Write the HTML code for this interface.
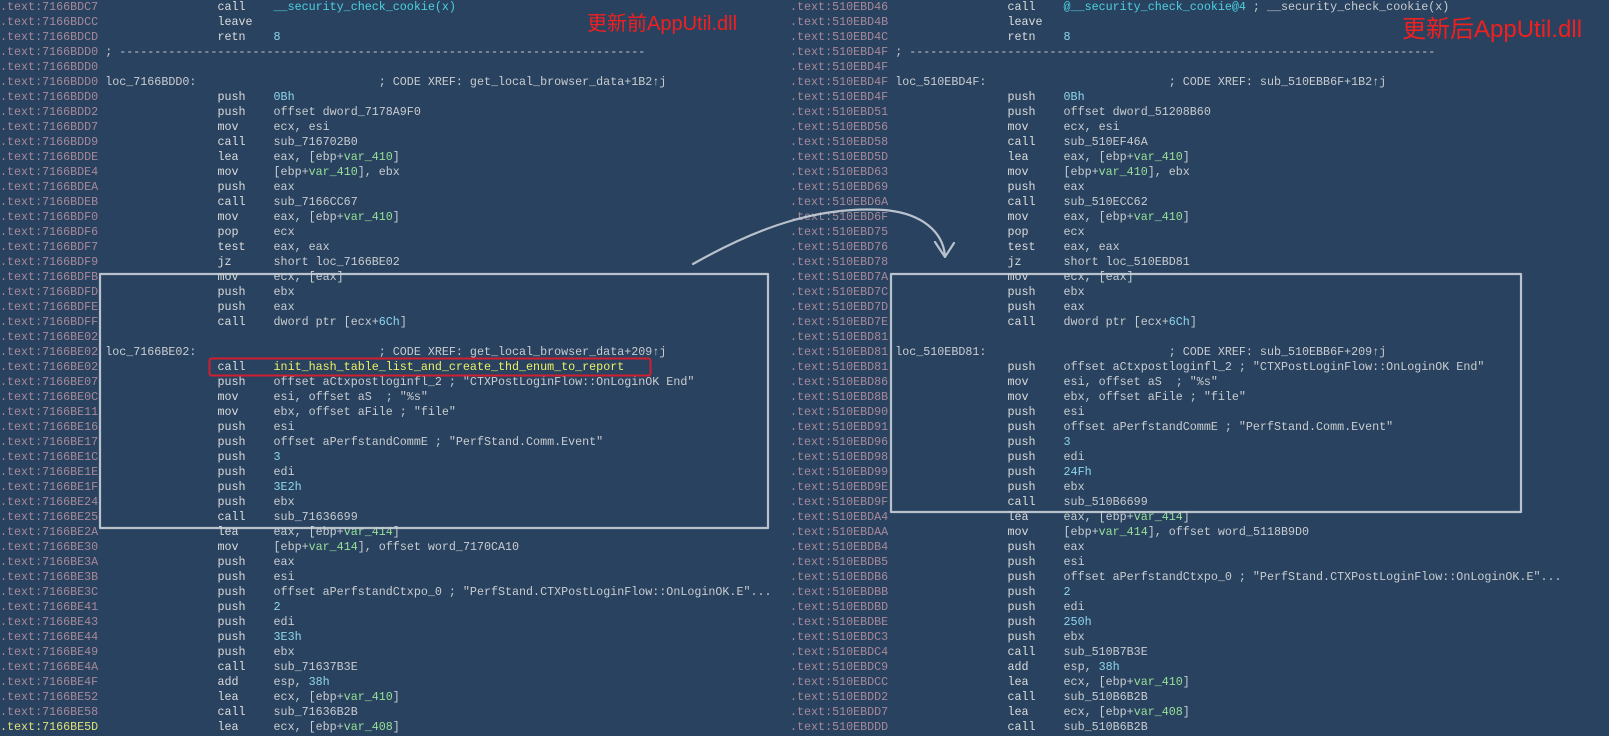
<!DOCTYPE html>
<html><head><meta charset="utf-8">
<style>
html,body{margin:0;padding:0;}
body{width:1609px;height:736px;background:#28425f;overflow:hidden;position:relative;}
pre{position:absolute;top:0;margin:0;font-family:"Liberation Mono",monospace;font-size:11.7px;line-height:15px;color:#c9ccd0;white-space:pre;}
.a{color:#a8899a}
.m{color:#dcdcdc}
.n{color:#8fd6ee}
.v{color:#98e098}
.f{color:#4fd0e0}
.y{color:#eeee66}
.ya{color:#e0e07a}
.t{position:absolute;font-family:"Liberation Sans","Noto Sans CJK SC",sans-serif;color:#f02020;font-size:20px;line-height:25px;}
svg{position:absolute;left:0;top:0}
</style></head><body>
<pre style="left:0"><span class="a">.text:7166BDC7</span>                 <span class="m">call    </span><span class="f">__security_check_cookie(x)</span>
<span class="a">.text:7166BDCC</span>                 <span class="m">leave</span>
<span class="a">.text:7166BDCD</span>                 <span class="m">retn    </span><span class="n">8</span>
<span class="a">.text:7166BDD0</span> ; ---------------------------------------------------------------------------
<span class="a">.text:7166BDD0</span>
<span class="a">.text:7166BDD0</span> loc_7166BDD0:                          ; CODE XREF: get_local_browser_data+1B2↑j
<span class="a">.text:7166BDD0</span>                 <span class="m">push    </span><span class="n">0Bh</span>
<span class="a">.text:7166BDD2</span>                 <span class="m">push    </span>offset dword_7178A9F0
<span class="a">.text:7166BDD7</span>                 <span class="m">mov     </span>ecx, esi
<span class="a">.text:7166BDD9</span>                 <span class="m">call    </span>sub_716702B0
<span class="a">.text:7166BDDE</span>                 <span class="m">lea     </span>eax, [ebp+<span class="v">var_410</span>]
<span class="a">.text:7166BDE4</span>                 <span class="m">mov     </span>[ebp+<span class="v">var_410</span>], ebx
<span class="a">.text:7166BDEA</span>                 <span class="m">push    </span>eax
<span class="a">.text:7166BDEB</span>                 <span class="m">call    </span>sub_7166CC67
<span class="a">.text:7166BDF0</span>                 <span class="m">mov     </span>eax, [ebp+<span class="v">var_410</span>]
<span class="a">.text:7166BDF6</span>                 <span class="m">pop     </span>ecx
<span class="a">.text:7166BDF7</span>                 <span class="m">test    </span>eax, eax
<span class="a">.text:7166BDF9</span>                 <span class="m">jz      </span>short loc_7166BE02
<span class="a">.text:7166BDFB</span>                 <span class="m">mov     </span>ecx, [eax]
<span class="a">.text:7166BDFD</span>                 <span class="m">push    </span>ebx
<span class="a">.text:7166BDFE</span>                 <span class="m">push    </span>eax
<span class="a">.text:7166BDFF</span>                 <span class="m">call    </span>dword ptr [ecx+<span class="n">6Ch</span>]
<span class="a">.text:7166BE02</span>
<span class="a">.text:7166BE02</span> loc_7166BE02:                          ; CODE XREF: get_local_browser_data+209↑j
<span class="a">.text:7166BE02</span>                 <span class="m">call    </span><span class="y">init_hash_table_list_and_create_thd_enum_to_report</span>
<span class="a">.text:7166BE07</span>                 <span class="m">push    </span>offset aCtxpostloginfl_2 ; "CTXPostLoginFlow::OnLoginOK End"
<span class="a">.text:7166BE0C</span>                 <span class="m">mov     </span>esi, offset aS  ; "%s"
<span class="a">.text:7166BE11</span>                 <span class="m">mov     </span>ebx, offset aFile ; "file"
<span class="a">.text:7166BE16</span>                 <span class="m">push    </span>esi
<span class="a">.text:7166BE17</span>                 <span class="m">push    </span>offset aPerfstandCommE ; "PerfStand.Comm.Event"
<span class="a">.text:7166BE1C</span>                 <span class="m">push    </span><span class="n">3</span>
<span class="a">.text:7166BE1E</span>                 <span class="m">push    </span>edi
<span class="a">.text:7166BE1F</span>                 <span class="m">push    </span><span class="n">3E2h</span>
<span class="a">.text:7166BE24</span>                 <span class="m">push    </span>ebx
<span class="a">.text:7166BE25</span>                 <span class="m">call    </span>sub_71636699
<span class="a">.text:7166BE2A</span>                 <span class="m">lea     </span>eax, [ebp+<span class="v">var_414</span>]
<span class="a">.text:7166BE30</span>                 <span class="m">mov     </span>[ebp+<span class="v">var_414</span>], offset word_7170CA10
<span class="a">.text:7166BE3A</span>                 <span class="m">push    </span>eax
<span class="a">.text:7166BE3B</span>                 <span class="m">push    </span>esi
<span class="a">.text:7166BE3C</span>                 <span class="m">push    </span>offset aPerfstandCtxpo_0 ; "PerfStand.CTXPostLoginFlow::OnLoginOK.E"...
<span class="a">.text:7166BE41</span>                 <span class="m">push    </span><span class="n">2</span>
<span class="a">.text:7166BE43</span>                 <span class="m">push    </span>edi
<span class="a">.text:7166BE44</span>                 <span class="m">push    </span><span class="n">3E3h</span>
<span class="a">.text:7166BE49</span>                 <span class="m">push    </span>ebx
<span class="a">.text:7166BE4A</span>                 <span class="m">call    </span>sub_71637B3E
<span class="a">.text:7166BE4F</span>                 <span class="m">add     </span>esp, <span class="n">38h</span>
<span class="a">.text:7166BE52</span>                 <span class="m">lea     </span>ecx, [ebp+<span class="v">var_410</span>]
<span class="a">.text:7166BE58</span>                 <span class="m">call    </span>sub_71636B2B
<span class="ya">.text:7166BE5D</span>                 <span class="m">lea     </span>ecx, [ebp+<span class="v">var_408</span>]</pre>
<pre style="left:790px"><span class="a">.text:510EBD46</span>                 <span class="m">call    </span><span class="f">@__security_check_cookie@4</span> ; __security_check_cookie(x)
<span class="a">.text:510EBD4B</span>                 <span class="m">leave</span>
<span class="a">.text:510EBD4C</span>                 <span class="m">retn    </span><span class="n">8</span>
<span class="a">.text:510EBD4F</span> ; ---------------------------------------------------------------------------
<span class="a">.text:510EBD4F</span>
<span class="a">.text:510EBD4F</span> loc_510EBD4F:                          ; CODE XREF: sub_510EBB6F+1B2↑j
<span class="a">.text:510EBD4F</span>                 <span class="m">push    </span><span class="n">0Bh</span>
<span class="a">.text:510EBD51</span>                 <span class="m">push    </span>offset dword_51208B60
<span class="a">.text:510EBD56</span>                 <span class="m">mov     </span>ecx, esi
<span class="a">.text:510EBD58</span>                 <span class="m">call    </span>sub_510EF46A
<span class="a">.text:510EBD5D</span>                 <span class="m">lea     </span>eax, [ebp+<span class="v">var_410</span>]
<span class="a">.text:510EBD63</span>                 <span class="m">mov     </span>[ebp+<span class="v">var_410</span>], ebx
<span class="a">.text:510EBD69</span>                 <span class="m">push    </span>eax
<span class="a">.text:510EBD6A</span>                 <span class="m">call    </span>sub_510ECC62
<span class="a">.text:510EBD6F</span>                 <span class="m">mov     </span>eax, [ebp+<span class="v">var_410</span>]
<span class="a">.text:510EBD75</span>                 <span class="m">pop     </span>ecx
<span class="a">.text:510EBD76</span>                 <span class="m">test    </span>eax, eax
<span class="a">.text:510EBD78</span>                 <span class="m">jz      </span>short loc_510EBD81
<span class="a">.text:510EBD7A</span>                 <span class="m">mov     </span>ecx, [eax]
<span class="a">.text:510EBD7C</span>                 <span class="m">push    </span>ebx
<span class="a">.text:510EBD7D</span>                 <span class="m">push    </span>eax
<span class="a">.text:510EBD7E</span>                 <span class="m">call    </span>dword ptr [ecx+<span class="n">6Ch</span>]
<span class="a">.text:510EBD81</span>
<span class="a">.text:510EBD81</span> loc_510EBD81:                          ; CODE XREF: sub_510EBB6F+209↑j
<span class="a">.text:510EBD81</span>                 <span class="m">push    </span>offset aCtxpostloginfl_2 ; "CTXPostLoginFlow::OnLoginOK End"
<span class="a">.text:510EBD86</span>                 <span class="m">mov     </span>esi, offset aS  ; "%s"
<span class="a">.text:510EBD8B</span>                 <span class="m">mov     </span>ebx, offset aFile ; "file"
<span class="a">.text:510EBD90</span>                 <span class="m">push    </span>esi
<span class="a">.text:510EBD91</span>                 <span class="m">push    </span>offset aPerfstandCommE ; "PerfStand.Comm.Event"
<span class="a">.text:510EBD96</span>                 <span class="m">push    </span><span class="n">3</span>
<span class="a">.text:510EBD98</span>                 <span class="m">push    </span>edi
<span class="a">.text:510EBD99</span>                 <span class="m">push    </span><span class="n">24Fh</span>
<span class="a">.text:510EBD9E</span>                 <span class="m">push    </span>ebx
<span class="a">.text:510EBD9F</span>                 <span class="m">call    </span>sub_510B6699
<span class="a">.text:510EBDA4</span>                 <span class="m">lea     </span>eax, [ebp+<span class="v">var_414</span>]
<span class="a">.text:510EBDAA</span>                 <span class="m">mov     </span>[ebp+<span class="v">var_414</span>], offset word_5118B9D0
<span class="a">.text:510EBDB4</span>                 <span class="m">push    </span>eax
<span class="a">.text:510EBDB5</span>                 <span class="m">push    </span>esi
<span class="a">.text:510EBDB6</span>                 <span class="m">push    </span>offset aPerfstandCtxpo_0 ; "PerfStand.CTXPostLoginFlow::OnLoginOK.E"...
<span class="a">.text:510EBDBB</span>                 <span class="m">push    </span><span class="n">2</span>
<span class="a">.text:510EBDBD</span>                 <span class="m">push    </span>edi
<span class="a">.text:510EBDBE</span>                 <span class="m">push    </span><span class="n">250h</span>
<span class="a">.text:510EBDC3</span>                 <span class="m">push    </span>ebx
<span class="a">.text:510EBDC4</span>                 <span class="m">call    </span>sub_510B7B3E
<span class="a">.text:510EBDC9</span>                 <span class="m">add     </span>esp, <span class="n">38h</span>
<span class="a">.text:510EBDCC</span>                 <span class="m">lea     </span>ecx, [ebp+<span class="v">var_410</span>]
<span class="a">.text:510EBDD2</span>                 <span class="m">call    </span>sub_510B6B2B
<span class="a">.text:510EBDD7</span>                 <span class="m">lea     </span>ecx, [ebp+<span class="v">var_408</span>]
<span class="a">.text:510EBDDD</span>                 <span class="m">call    </span>sub_510B6B2B</pre>
<div class="t" style="left:587px;top:12px;">更新前AppUtil.dll</div>
<div class="t" style="left:1402px;top:16px;font-size:24px;line-height:28px;">更新后AppUtil.dll</div>
<svg width="1609" height="736" viewBox="0 0 1609 736">
  <g fill="none" stroke="#c9d0d8" stroke-width="2.2" stroke-linecap="round" stroke-linejoin="round" opacity="0.9">
    <rect x="100" y="274" width="668" height="254"/>
    <rect x="891" y="274" width="630" height="238"/>
    <path d="M693 264 C 760 226, 820 206, 884 210 C 922 213, 943 232, 945 256"/>
    <path d="M935 242 L945 257 L954 243"/>
  </g>
  <rect x="209.5" y="358.5" width="441" height="17" rx="2" fill="none" stroke="#d02030" stroke-width="2"/>
</svg>
</body></html>
